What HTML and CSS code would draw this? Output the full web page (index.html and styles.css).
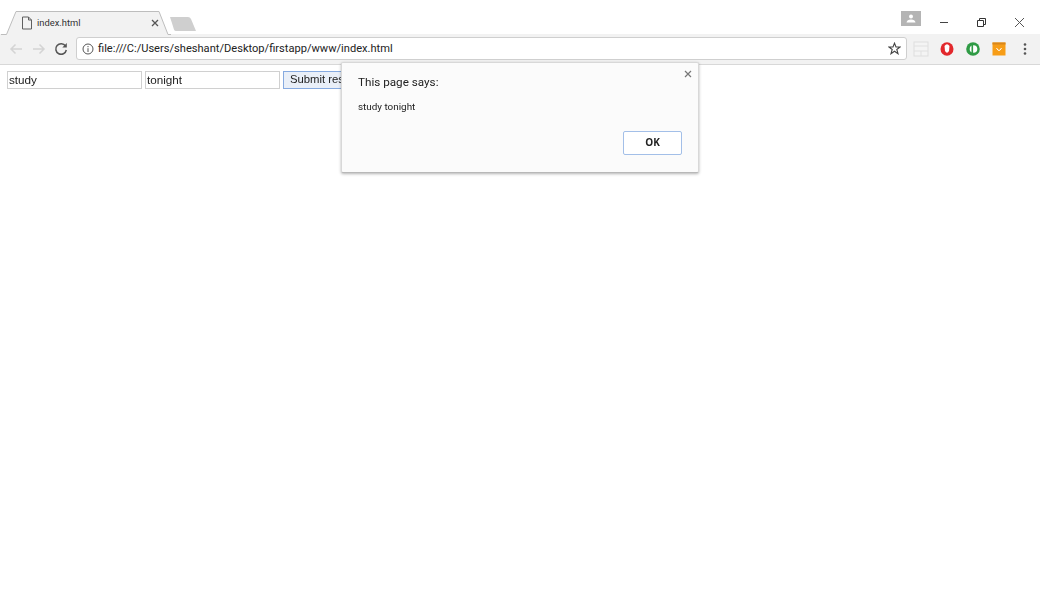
FILE: index.html
```html
<!DOCTYPE html>
<html lang="en">
<head>
<meta charset="utf-8">
<title>index.html</title>
<link rel="stylesheet" href="styles.css">
</head>
<body>
<div class="browser">
  <header class="tabstrip">
    <div class="tabs">
      <div class="tab">
        <svg class="tab-shape" width="170" height="24" viewBox="0 0 170 24"><path d="M0 23.500H5.500L15 .5H158L167 23.500H170" fill="#f2f2f2" stroke="#bdbdbd"/></svg>
        <svg class="tab-icon" width="12" height="14" viewBox="0 0 12 14"><path d="M1.500 1H7.500L10.500 4V13H1.500Z M7.500 1V4H10.500" fill="none" stroke="#5f5f5f"/></svg>
        <span class="tab-title">index.html</span>
        <svg class="tab-close" width="8" height="8" viewBox="0 0 8 8"><path d="M1 1L7 7M7 1L1 7" stroke="#555" stroke-width="1.300"/></svg>
      </div>
      <svg class="newtab" width="30" height="16" viewBox="0 0 30 16"><path d="M2 1H20Q22 1 23 3L28 15H8Q6.500 15 6 13.500Z" fill="#cfcfcf"/></svg>
    </div>
    <div class="window-controls">
      <div class="profile"><svg width="10" height="9" viewBox="0 0 10 9"><circle cx="5" cy="2.500" r="2" fill="#fff"/><path d="M0.500 8.500Q1 5.500 5 5.500T9.500 8.500Z" fill="#fff"/></svg></div>
      <svg class="wc" width="38" height="22" viewBox="0 0 38 22"><path d="M16 11.500H24" stroke="#444"/></svg>
      <svg class="wc" width="38" height="22" viewBox="0 0 38 22"><path d="M15.500 9.500H21.500V15.500H15.500Z M17.500 9.500V7.500H23.500V13.500H21.500" fill="none" stroke="#333"/></svg>
      <svg class="wc" width="38" height="22" viewBox="0 0 38 22"><path d="M15 7L24 16M24 7L15 16" stroke="#555"/></svg>
    </div>
  </header>
  <nav class="toolbar">
    <svg class="navbtn" width="14" height="12" viewBox="0 0 14 12"><path d="M13 6H2M6.500 1.500L2 6L6.500 10.500" fill="none" stroke="#d4d4d4" stroke-width="1.500"/></svg>
    <svg class="navbtn" width="14" height="12" viewBox="0 0 14 12"><path d="M1 6H12M7.500 1.500L12 6L7.500 10.500" fill="none" stroke="#d4d4d4" stroke-width="1.500"/></svg>
    <svg class="navbtn reload" width="14" height="14" viewBox="0 0 14 14"><path d="M11.500 4A5.300 5.300 0 1 0 12.300 8" fill="none" stroke="#555" stroke-width="1.500"/><path d="M12.800 1V5.500H8.300Z" fill="#555"/></svg>
    <div class="omnibox">
      <svg class="info" width="12" height="12" viewBox="0 0 12 12"><circle cx="6" cy="6" r="5" fill="none" stroke="#555"/><path d="M6 5.200V9M6 3V4.200" stroke="#555"/></svg>
      <span class="url">file:///C:/Users/sheshant/Desktop/firstapp/www/index.html</span>
      <svg class="star" width="13" height="13" viewBox="0 0 13 13"><path d="M6.500 1.200L8 5H12L8.800 7.500L10 11.700L6.500 9.200L3 11.700L4.200 7.500L1 5H5Z" fill="none" stroke="#444" stroke-width="1.100"/></svg>
    </div>
    <div class="extensions">
      <svg width="16" height="16" viewBox="0 0 16 16"><rect x="1" y="1" width="14" height="14" fill="#f4f4f4" stroke="#dedede"/><path d="M1 5H15M1 10H15M8 10V15" stroke="#e0e0e0"/></svg>
      <svg width="16" height="16" viewBox="0 0 16 16"><ellipse cx="8" cy="8" rx="6.500" ry="6.800" fill="#e2282c"/><path d="M5.500 5Q8 1.500 10.500 5L10 10Q8 13.500 6 10Z" fill="#fff"/></svg>
      <svg width="16" height="16" viewBox="0 0 16 16"><circle cx="8" cy="8" r="6.800" fill="#2f9b45"/><circle cx="8.500" cy="8" r="3.800" fill="#fff"/><rect x="6.500" y="4" width="1.600" height="8" fill="#2f9b45"/></svg>
      <svg width="16" height="16" viewBox="0 0 16 16"><rect x="1.500" y="1.500" width="13" height="13" fill="#f79d17"/><rect x="1.500" y="1.500" width="13" height="2" fill="#d9861a"/><path d="M5.500 7Q8 12 10.500 7" fill="none" stroke="#fff" stroke-width="1"/></svg>
      <svg class="menu" width="4" height="14" viewBox="0 0 4 14"><circle cx="2" cy="2.500" r="1.300" fill="#555"/><circle cx="2" cy="7" r="1.300" fill="#555"/><circle cx="2" cy="11.500" r="1.300" fill="#555"/></svg>
    </div>
  </nav>
  <main class="content">
    <input class="field" type="text" value="study">
    <input class="field" type="text" value="tonight">
    <button class="submit" type="button">Submit result</button>
  </main>
  <div class="dialog">
    <svg class="dialog-close" width="8" height="8" viewBox="0 0 8 8"><path d="M1 1L7 7M7 1L1 7" stroke="#777" stroke-width="1.200"/></svg>
    <h1 class="dialog-title">This page says:</h1>
    <p class="dialog-msg">study tonight</p>
    <div class="dialog-actions"><button class="ok" type="button">OK</button></div>
  </div>
</div>
</body>
</html>
```

FILE: styles.css
```css
html, body { margin: 0; padding: 0; background: #fff; }
body { font-family: "Liberation Sans", Arial, sans-serif; color: #222; }
.browser { position: relative; width: 1040px; height: 608px; overflow: hidden; filter: blur(0.35px); }
.tabstrip { display: flex; justify-content: space-between; height: 34px; background: #fff; box-sizing: border-box; }
.tabs { display: flex; align-items: flex-end; padding-left: 1px; }
.tab { position: relative; width: 170px; height: 23px; display: flex; align-items: center; padding-left: 20px; box-sizing: border-box; }
.tab-shape { position: absolute; left: 0; top: 0; }
.tab-icon, .tab-title, .tab-close { position: relative; }
.tab-title { font-family: Roboto, sans-serif; font-size: 9.400px; color: #333; margin-left: 4px; width: 114px; }
.newtab { margin: 0 0 2px -3px; }
.window-controls { display: flex; align-items: flex-start; padding: 11px 2px 0 0; }
.profile { width: 20px; height: 15px; background: #b4b4b4; display: flex; align-items: center; justify-content: center; margin-right: 3px; }
.wc { display: block; }
.toolbar { display: flex; align-items: center; height: 31px; background: #f2f2f2; border-bottom: 1px solid #d8d8d8; box-sizing: border-box; padding: 0 0 1px 9px; }
.navbtn { margin-right: 9px; }
.reload { margin-left: -1px; margin-right: 8px; }
.omnibox { display: flex; align-items: center; width: 831px; height: 23px; background: #fff; border: 1px solid #cfcfcf; border-radius: 3px; box-sizing: border-box; padding: 0 5px; }
.info { margin-right: 4px; }
.url { flex: 1; font-family: Roboto, sans-serif; font-size: 11.100px; color: #222; white-space: nowrap; }
.extensions { display: flex; align-items: center; gap: 10px; margin-left: 6px; }
.menu { margin-left: 6px; }
.content { display: flex; align-items: center; padding: 6px 0 0 7px; }
.field { width: 135px; height: 18px; box-sizing: border-box; border: 1px solid #d0d0d0; padding: 0 1px 2px; margin: 0 3px 0 0; font-family: "Liberation Sans", sans-serif; font-size: 11.700px; color: #222; background: #fff; }
.submit { width: 90px; height: 18px; box-sizing: border-box; border: 1px solid #86aae0; background: #e9eff8; padding: 0 0 2px 6px; text-align: left; font-family: "Liberation Sans", sans-serif; font-size: 11.300px; color: #222; white-space: nowrap; overflow: hidden; }
.dialog { position: absolute; left: 341px; top: 62px; width: 358px; height: 111px; box-sizing: border-box; background: #fbfbfb; border: 1px solid #d8d8d8; border-bottom-color: #b8b8b8; border-radius: 2px; box-shadow: 0 1px 3px rgba(0,0,0,.3); padding: 11px 16px 0; }
.dialog-close { position: absolute; right: 6px; top: 7px; }
.dialog-title { margin: 0; font-family: Roboto, sans-serif; font-weight: 400; font-size: 11.700px; line-height: 16px; color: #222; }
.dialog-msg { margin: 10px 0 0; font-family: Roboto, sans-serif; font-size: 9.900px; line-height: 14px; color: #222; }
.dialog-actions { display: flex; justify-content: flex-end; margin-top: 17px; }
.ok { width: 59px; height: 24px; box-sizing: border-box; border: 1px solid #a3bfe8; border-radius: 2px; background: #fff; font-family: "Open Sans", sans-serif; font-weight: 700; font-size: 10px; color: #222; padding: 0 0 3px; }
```
